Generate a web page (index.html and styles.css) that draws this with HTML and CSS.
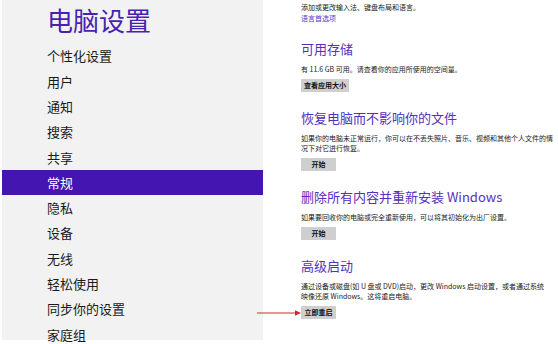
FILE: index.html
```html
<!DOCTYPE html>
<html lang="zh-CN">
<head>
<meta charset="utf-8">
<link rel="stylesheet" href="styles.css">
</head>
<body>
<div class="page">
  <aside class="sidebar">
    <div class="title">电脑设置</div>
    <ul class="nav">
      <li class="nav-item">个性化设置</li>
      <li class="nav-item">用户</li>
      <li class="nav-item">通知</li>
      <li class="nav-item">搜索</li>
      <li class="nav-item">共享</li>
      <li class="nav-item active">常规</li>
      <li class="nav-item">隐私</li>
      <li class="nav-item">设备</li>
      <li class="nav-item">无线</li>
      <li class="nav-item">轻松使用</li>
      <li class="nav-item">同步你的设置</li>
      <li class="nav-item">家庭组</li>
    </ul>
  </aside>
  <main class="content">
    <p class="text">添加或更改输入法、键盘布局和语言。</p>
    <p class="text link">语言首选项</p>

    <section class="section">
      <h2 class="heading">可用存储</h2>
      <p class="text desc">有 11.6 GB 可用。请查看你的应用所使用的空间量。</p>
      <button class="btn">查看应用大小</button>
    </section>

    <section class="section">
      <h2 class="heading">恢复电脑而不影响你的文件</h2>
      <p class="text desc nowrap">如果你的电脑未正常运行，你可以在不丢失照片、音乐、视频和其他个人文件的情<br>况下对它进行恢复。</p>
      <button class="btn">开始</button>
    </section>

    <section class="section">
      <h2 class="heading">删除所有内容并重新安装 Windows</h2>
      <p class="text desc">如果要回收你的电脑或完全重新使用，可以将其初始化为出厂设置。</p>
      <button class="btn">开始</button>
    </section>

    <section class="section">
      <h2 class="heading">高级启动</h2>
      <p class="text desc nowrap">通过设备或磁盘(如 U 盘或 DVD)启动，更改 Windows 启动设置，或者通过系统<br>映像还原 Windows。这将重启电脑。</p>
      <button class="btn">立即重启</button>
    </section>
  </main>
</div>
<svg class="arrow" width="48" height="10" viewBox="0 0 48 10">
  <line x1="0" y1="5" x2="40" y2="5" stroke="#d8262e" stroke-width="1"/>
  <polygon points="38,2.2 44,5 38,7.8" fill="#d8262e"/>
</svg>
</body>
</html>
```

FILE: styles.css
```css
html, body {
  margin: 0;
  padding: 0;
  background: #ffffff;
}

body {
  width: 558px;
  height: 344px;
  overflow: hidden;
  position: relative;
  font-family: "Noto Sans CJK SC", "Noto Sans", sans-serif;
  color: #1e1e1e;
}

.page {
  display: flex;
  padding-left: 2px;
}

.sidebar {
  width: 261px;
  height: 340px;
  background: #f2f2f2;
  padding-top: 7px;
  box-sizing: border-box;
  flex-shrink: 0;
}

.title {
  font-size: 26px;
  line-height: 26px;
  color: #4a1fb3;
  margin: 0 0 10.4px 45px;
}

.nav {
  list-style: none;
  margin: 0;
  padding: 0;
}

.nav-item {
  height: 25.3px;
  line-height: 25.3px;
  padding-left: 45px;
  font-size: 13px;
  color: #1a1a1a;
}

.nav-item.active {
  background: #4515b1;
  color: #ffffff;
}

.content {
  margin-left: 38px;
  padding-top: 2px;
  width: 257px;
}

.text {
  margin: 0;
  font-size: 7px;
  line-height: 10px;
  color: #222222;
}

.link {
  margin-top: 1px;
  color: #5b36c8;
}

.nowrap {
  white-space: nowrap;
}

.section {
  margin-top: 18px;
}

.heading {
  margin: 0;
  font-size: 13px;
  line-height: 16px;
  font-weight: normal;
  color: #5530c0;
}

.desc {
  margin-top: 7px;
}

.btn {
  display: block;
  margin-top: 5px;
  height: 13px;
  min-width: 35px;
  padding: 0 3px;
  border: 0;
  background: #cfcfcf;
  font-family: "Noto Sans CJK SC", "Noto Sans", sans-serif;
  font-size: 7px;
  font-weight: bold;
  line-height: 13px;
  color: #111111;
  text-align: center;
}

.arrow {
  position: absolute;
  left: 257px;
  top: 308px;
}
```
